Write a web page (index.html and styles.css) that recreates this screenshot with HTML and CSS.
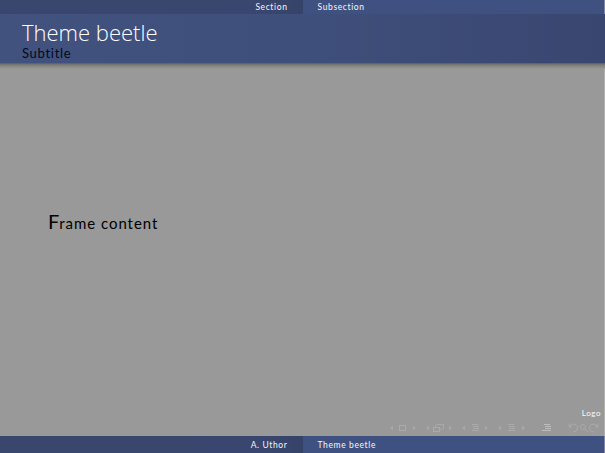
FILE: index.html
```html
<!DOCTYPE html>
<html lang="en">
<head>
<meta charset="utf-8">
<title>Theme beetle</title>
<link rel="stylesheet" href="styles.css">
</head>
<body>
<div class="slide">
  <div class="headline">
    <div class="half half-dark"><span>Section</span></div>
    <div class="half half-light"><span>Subsection</span></div>
  </div>
  <header class="frametitle">
    <div class="title">Theme beetle</div>
    <div class="subtitle">Subtitle</div>
  </header>
  <div class="shadow"></div>
  <main class="content">
    <p class="frame-text"><span class="initial">F</span>rame content</p>
  </main>
  <div class="bottom-area">
    <div class="logo">Logo</div>
    <svg class="nav-svg" width="212" height="11" viewBox="389 423 212 11" fill="none" stroke="#aaaaaa" stroke-width="1">
      <g fill="#a8a8a8" stroke="none">
        <path d="M393 425.5 L390 428 L393 430.5Z"/>
        <path d="M413 425.5 L416 428 L413 430.5Z"/>
        <path d="M429 425.5 L426 428 L429 430.5Z"/>
        <path d="M449 425.5 L452 428 L449 430.5Z"/>
        <path d="M465 425.5 L462 428 L465 430.5Z"/>
        <path d="M485 425.5 L488 428 L485 430.5Z"/>
        <path d="M501 425.5 L498 428 L501 430.5Z"/>
        <path d="M522 425.5 L525 428 L522 430.5Z"/>
      </g>
      <rect x="399.5" y="425.5" width="6" height="5"/>
      <rect x="433.5" y="427.5" width="6" height="4"/>
      <path d="M435.5 427 V425.5 L437 424.5 H443.5 V428.5 L440 430"/>
      <path d="M472 424.5 H478 M473 426.5 H479 M473 428.5 H479 M472 430.5 H479"/>
      <path d="M508 424.5 H514 M509 426.5 H515 M509 428.5 H515 M508 430.5 H515"/>
      <path d="M544 424.5 H550 M545 426.5 H551 M545 428.5 H551 M542 430.5 H551" stroke="#bdbdbd"/>
      <path d="M570 426 A4 4 0 1 1 573 432"/>
      <path d="M568 424.5 L572 425 L570 429Z" fill="#a8a8a8" stroke="none"/>
      <circle cx="583" cy="427" r="2.5"/>
      <path d="M585 429 L588 432"/>
      <path d="M597 426 A4 4 0 1 0 594 432"/>
      <path d="M599 424.5 L595 425 L597 429Z" fill="#a8a8a8" stroke="none"/>
    </svg>
  </div>
  <footer class="footline">
    <div class="half half-dark"><span>A. Uthor</span></div>
    <div class="half half-light"><span>Theme beetle</span></div>
  </footer>
</div>
</body>
</html>
```

FILE: styles.css
```css
html, body {
  margin: 0;
  padding: 0;
}

body {
  width: 605px;
  height: 453px;
  overflow: hidden;
  font-family: "Lato", "Open Sans", sans-serif;
  background: #999999;
}

.slide {
  display: flex;
  flex-direction: column;
  width: 605px;
  height: 453px;
  background: #999999;
}

.headline {
  display: flex;
  flex: 0 0 14px;
  height: 14px;
}

.half {
  display: flex;
  align-items: center;
  width: 50%;
  box-sizing: border-box;
  color: #f6f6fa;
  font-size: 8.5px;
  letter-spacing: 0.62px;
}

.half-dark {
  justify-content: flex-end;
  padding-right: 15px;
  background: linear-gradient(90deg, #39466e, #39466f 85%, #364369);
}

.half-light {
  padding-left: 15px;
  background: #3f5180;
  border-right: 1px solid #7f88a3;
}

.frametitle {
  flex: 0 0 49px;
  height: 49px;
  box-sizing: border-box;
  padding: 6px 0 0 22px;
  background: linear-gradient(90deg, #41527f, #3f4f7b 50%, #394670);
}

.title {
  font-family: "Open Sans", "Lato", sans-serif;
  color: #ffffff;
  font-size: 22px;
  font-weight: 300;
  line-height: 24px;
}

.subtitle {
  margin-top: 2px;
  color: #05081a;
  font-size: 13px;
  line-height: 14px;
  letter-spacing: 0.7px;
}

.shadow {
  flex: 0 0 6px;
  height: 6px;
  background: linear-gradient(180deg, #5e5c55, #7e7e7c 35%, #999999);
}

.content {
  flex: 1 1 auto;
  display: flex;
  align-items: center;
  padding-left: 48px;
  padding-bottom: 35px;
  border-right: 1px solid #b0b0b0;
}

.frame-text {
  margin: 0;
  color: #000000;
  font-size: 15px;
  letter-spacing: 0.95px;
}

.initial {
  font-size: 20px;
  line-height: 1;
  letter-spacing: 0;
}

.bottom-area {
  display: flex;
  flex-direction: column;
  align-items: flex-end;
  padding: 0 3px 2px 0;
  border-right: 1px solid #b0b0b0;
}

.logo {
  color: #fafafa;
  font-size: 8px;
  line-height: 10px;
  letter-spacing: 0.55px;
  margin-bottom: 5px;
}

.nav-svg {
  display: block;
}

.footline {
  display: flex;
  flex: 0 0 17px;
  height: 17px;
}
```
